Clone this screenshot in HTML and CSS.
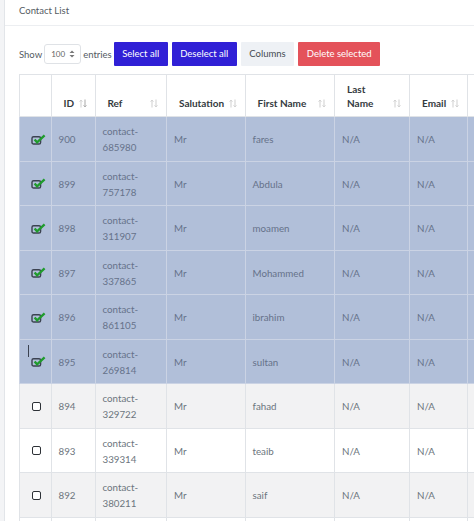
FILE: index.html
```html
<!DOCTYPE html>
<html>
<head>
<meta charset="utf-8">
<link rel="stylesheet" href="styles.css">
</head>
<body>
<div class="card">
  <div class="card-header">Contact List</div>
  <div class="card-body">
    <div class="controls">
      <div class="length">
        <span>Show</span>
        <span class="select">100
          <svg width="6" height="8" viewBox="0 0 6 8"><path d="M0.5 3L3 0.5L5.5 3Z M0.5 5L3 7.5L5.5 5Z" fill="#777"/></svg>
        </span>
        <span>entries</span>
      </div>
      <div class="buttons">
        <button class="btn btn-primary">Select all</button>
        <button class="btn btn-primary">Deselect all</button>
        <button class="btn btn-light">Columns</button>
        <button class="btn btn-danger">Delete selected</button>
      </div>
    </div>
    <table class="table">
      <colgroup>
        <col class="c-check"><col class="c-id"><col class="c-ref"><col class="c-sal"><col class="c-first"><col class="c-last"><col class="c-email"><col class="c-more">
      </colgroup>
      <thead>
        <tr>
          <th class="th-check"></th>
          <th><div class="th-inner"><span>ID</span><svg class="sort" width="8" height="9" viewBox="0 0 8 9"><path d="M2 8.5V1M0.6 2.6L2 1.1L3.4 2.6" stroke="#cfcfcf" fill="none"/><path d="M6 0.5V8M4.6 6.4L6 7.9L7.4 6.4" stroke="#a9a9a9" fill="none"/></svg></div></th>
          <th><div class="th-inner"><span>Ref</span><svg class="sort" width="8" height="9" viewBox="0 0 8 9"><path d="M2 8.5V1M0.6 2.6L2 1.1L3.4 2.6" stroke="#cfcfcf" fill="none"/><path d="M6 0.5V8M4.6 6.4L6 7.9L7.4 6.4" stroke="#cfcfcf" fill="none"/></svg></div></th>
          <th><div class="th-inner"><span>Salutation</span><svg class="sort" width="8" height="9" viewBox="0 0 8 9"><path d="M2 8.5V1M0.6 2.6L2 1.1L3.4 2.6" stroke="#cfcfcf" fill="none"/><path d="M6 0.5V8M4.6 6.4L6 7.9L7.4 6.4" stroke="#cfcfcf" fill="none"/></svg></div></th>
          <th><div class="th-inner"><span>First Name</span><svg class="sort" width="8" height="9" viewBox="0 0 8 9"><path d="M2 8.5V1M0.6 2.6L2 1.1L3.4 2.6" stroke="#cfcfcf" fill="none"/><path d="M6 0.5V8M4.6 6.4L6 7.9L7.4 6.4" stroke="#cfcfcf" fill="none"/></svg></div></th>
          <th><div class="th-inner"><span>Last<br>Name</span><svg class="sort" width="8" height="9" viewBox="0 0 8 9"><path d="M2 8.5V1M0.6 2.6L2 1.1L3.4 2.6" stroke="#cfcfcf" fill="none"/><path d="M6 0.5V8M4.6 6.4L6 7.9L7.4 6.4" stroke="#cfcfcf" fill="none"/></svg></div></th>
          <th><div class="th-inner"><span>Email</span><svg class="sort" width="8" height="9" viewBox="0 0 8 9"><path d="M2 8.5V1M0.6 2.6L2 1.1L3.4 2.6" stroke="#cfcfcf" fill="none"/><path d="M6 0.5V8M4.6 6.4L6 7.9L7.4 6.4" stroke="#cfcfcf" fill="none"/></svg></div></th>
          <th class="th-more"></th>
        </tr>
      </thead>
      <tbody>
        <tr class="sel">
          <td class="td-check"><svg class="checked" width="15" height="11" viewBox="0 0 15 11"><rect x="1" y="2.7" width="8.6" height="7.3" rx="1.6" fill="none" stroke="#3b4250" stroke-width="1.4"/><path d="M3.6 5.4L6.1 8.3L13.6 1.4" fill="none" stroke="#1f9b2c" stroke-width="2.3"/></svg></td>
          <td>900</td><td>contact-<br>685980</td><td>Mr</td><td>fares</td><td>N/A</td><td>N/A</td><td></td>
        </tr>
        <tr class="sel">
          <td class="td-check"><svg class="checked" width="15" height="11" viewBox="0 0 15 11"><rect x="1" y="2.7" width="8.6" height="7.3" rx="1.6" fill="none" stroke="#3b4250" stroke-width="1.4"/><path d="M3.6 5.4L6.1 8.3L13.6 1.4" fill="none" stroke="#1f9b2c" stroke-width="2.3"/></svg></td>
          <td>899</td><td>contact-<br>757178</td><td>Mr</td><td>Abdula</td><td>N/A</td><td>N/A</td><td></td>
        </tr>
        <tr class="sel">
          <td class="td-check"><svg class="checked" width="15" height="11" viewBox="0 0 15 11"><rect x="1" y="2.7" width="8.6" height="7.3" rx="1.6" fill="none" stroke="#3b4250" stroke-width="1.4"/><path d="M3.6 5.4L6.1 8.3L13.6 1.4" fill="none" stroke="#1f9b2c" stroke-width="2.3"/></svg></td>
          <td>898</td><td>contact-<br>311907</td><td>Mr</td><td>moamen</td><td>N/A</td><td>N/A</td><td></td>
        </tr>
        <tr class="sel">
          <td class="td-check"><svg class="checked" width="15" height="11" viewBox="0 0 15 11"><rect x="1" y="2.7" width="8.6" height="7.3" rx="1.6" fill="none" stroke="#3b4250" stroke-width="1.4"/><path d="M3.6 5.4L6.1 8.3L13.6 1.4" fill="none" stroke="#1f9b2c" stroke-width="2.3"/></svg></td>
          <td>897</td><td>contact-<br>337865</td><td>Mr</td><td>Mohammed</td><td>N/A</td><td>N/A</td><td></td>
        </tr>
        <tr class="sel">
          <td class="td-check"><svg class="checked" width="15" height="11" viewBox="0 0 15 11"><rect x="1" y="2.7" width="8.6" height="7.3" rx="1.6" fill="none" stroke="#3b4250" stroke-width="1.4"/><path d="M3.6 5.4L6.1 8.3L13.6 1.4" fill="none" stroke="#1f9b2c" stroke-width="2.3"/></svg></td>
          <td>896</td><td>contact-<br>861105</td><td>Mr</td><td>ibrahim</td><td>N/A</td><td>N/A</td><td></td>
        </tr>
        <tr class="sel">
          <td class="td-check"><span class="caret"></span><svg class="checked" width="15" height="11" viewBox="0 0 15 11"><rect x="1" y="2.7" width="8.6" height="7.3" rx="1.6" fill="none" stroke="#3b4250" stroke-width="1.4"/><path d="M3.6 5.4L6.1 8.3L13.6 1.4" fill="none" stroke="#1f9b2c" stroke-width="2.3"/></svg></td>
          <td>895</td><td>contact-<br>269814</td><td>Mr</td><td>sultan</td><td>N/A</td><td>N/A</td><td></td>
        </tr>
        <tr class="odd">
          <td class="td-check"><span class="box"></span></td>
          <td>894</td><td>contact-<br>329722</td><td>Mr</td><td>fahad</td><td>N/A</td><td>N/A</td><td></td>
        </tr>
        <tr>
          <td class="td-check"><span class="box"></span></td>
          <td>893</td><td>contact-<br>339314</td><td>Mr</td><td>teaib</td><td>N/A</td><td>N/A</td><td></td>
        </tr>
        <tr class="odd">
          <td class="td-check"><span class="box"></span></td>
          <td>892</td><td>contact-<br>380211</td><td>Mr</td><td>saif</td><td>N/A</td><td>N/A</td><td></td>
        </tr>
        <tr>
          <td class="td-check"><span class="box"></span></td>
          <td></td><td></td><td></td><td></td><td></td><td></td><td></td>
        </tr>
      </tbody>
    </table>
  </div>
</div>
</body>
</html>
```

FILE: styles.css
```css
* { box-sizing: border-box; }
html, body {
  margin: 0;
  overflow: hidden;
  height: 521px;
}
body {
  background: #f3f4f6;
  font-family: Lato, "Noto Sans", sans-serif;
  font-size: 9.5px;
  color: #6c757d;
}
.card {
  margin-left: 4px;
  border-left: 1px solid #e2e5e9;
  background: #fff;
  height: 521px;
  overflow: hidden;
}
.card-header {
  height: 26px;
  padding: 4px 14px 0;
  line-height: 14px;
  font-size: 9.5px;
  color: #555b63;
  border-bottom: 1px solid #eceef1;
}
.card-body {
  padding: 16px 0 0 14px;
}
.controls {
  display: flex;
  align-items: center;
  gap: 2px;
  height: 24px;
  margin-bottom: 8px;
}
.length {
  display: flex;
  align-items: center;
  gap: 2px;
  color: #555b63;
}
.select {
  display: inline-flex;
  align-items: center;
  gap: 4px;
  width: 37px;
  height: 20px;
  padding-left: 6px;
  border: 1px solid #dfe2e6;
  border-radius: 3px;
  font-size: 8px;
  color: #666;
}
.buttons {
  display: flex;
  gap: 4px;
}
.btn {
  height: 24px;
  padding: 0 8.5px;
  border: none;
  border-radius: 1px;
  font-family: Lato, "Noto Sans", sans-serif;
  font-size: 9.5px;
  line-height: 24px;
}
.btn-primary { background: #3020d6; color: #fff; }
.btn-light { background: #eef1f5; color: #454b52; }
.btn-danger { background: #e4525a; color: #fff; }

.table {
  border-collapse: collapse;
  table-layout: fixed;
  width: 648px;
}
.c-check { width: 31.5px; }
.c-id { width: 44px; }
.c-ref { width: 71.5px; }
.c-sal { width: 78.5px; }
.c-first { width: 89.5px; }
.c-last { width: 75px; }
.c-email { width: 58px; }
.c-more { width: 200px; }

.table th, .table td {
  border: 1px solid #e0e3e7;
}
.table thead th {
  height: 42px;
  padding: 0 8px 6px 12px;
  vertical-align: bottom;
  text-align: left;
  line-height: 14px;
  font-size: 10px;
  font-weight: 700;
  color: #343a40;
  background: #fff;
}
.th-inner {
  display: flex;
  justify-content: space-between;
  align-items: flex-end;
}
.sort { margin-bottom: 2px; flex: none; }
.table tbody td {
  height: 44px;
  padding: 6px 7px 5.5px;
  line-height: 16px;
  vertical-align: middle;
  font-size: 9.75px;
  color: #6c757d;
  background: #fff;
  white-space: nowrap;
}
.table tbody td.td-check {
  padding-left: 11px;
  padding-right: 0;
  position: relative;
}
.checked { display: block; }
.table tbody tr.sel td {
  background: #b1bfd9;
  border-color: #cbd3e4;
  color: #66728a;
}
.table tbody tr.odd td {
  background: #f2f2f3;
}
.box {
  display: block;
  width: 9px;
  height: 9px;
  margin-left: 1px;
  border: 1.3px solid #2d3136;
  border-radius: 2px;
  background: #fff;
}
.caret {
  position: absolute;
  left: 8px;
  top: 5px;
  width: 1px;
  height: 12px;
  background: #3b4250;
}
```
